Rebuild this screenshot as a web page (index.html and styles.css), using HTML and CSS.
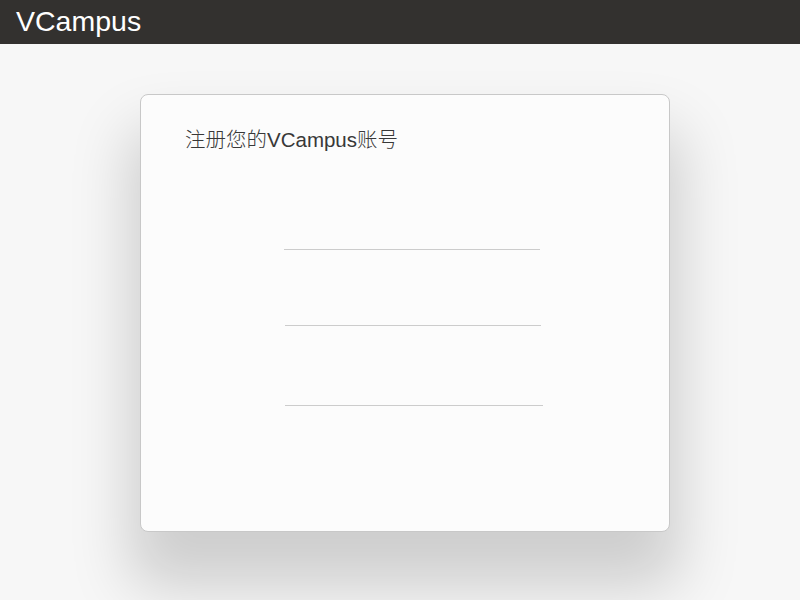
FILE: index.html
```html
<!DOCTYPE html>
<html lang="zh">
<head>
<meta charset="utf-8">
<title>VCampus</title>
<link rel="stylesheet" href="styles.css">
</head>
<body>
<header class="topbar"><span class="brand">VCampus</span></header>
<main class="stage">
  <section class="card">
    <h1 class="title">注册您的VCampus账号</h1>
    <div class="fields">
      <div class="field f1"></div>
      <div class="field f2"></div>
      <div class="field f3"></div>
    </div>
  </section>
</main>
</body>
</html>
```
FILE: styles.css
```css
html, body { margin: 0; padding: 0; }
body {
  width: 800px;
  height: 600px;
  overflow: hidden;
  background: #f7f7f7;
  font-family: "Liberation Sans", "Noto Sans CJK SC", sans-serif;
}
.topbar {
  height: 44px;
  background: #33312f;
  display: flex;
  align-items: center;
  padding-left: 16px;
}
.brand {
  color: #ffffff;
  font-size: 28.5px;
  line-height: 1;
  margin-top: -2px;
}
.stage {
  padding-top: 50px;
  padding-left: 140px;
}
.card {
  box-sizing: border-box;
  width: 530px;
  height: 438px;
  background: #fcfcfc;
  border: 1px solid #c8c8c8;
  border-radius: 8px;
  box-shadow: 0 45px 60px 10px rgba(0,0,0,0.17);
  padding: 33px 0 0 44px;
}
.title {
  margin: 0;
  font-weight: 300;
  font-size: 20.5px;
  line-height: 24px;
  color: #383838;
  font-family: "Liberation Sans", "Noto Sans CJK SC", sans-serif;
}
.fields {
  display: flex;
  flex-direction: column;
  padding-left: 99px;
  margin-top: 97px;
}
.field {
  height: 1px;
  background: #cccccc;
}
.f1 { width: 256px; }
.f2 { width: 256px; margin-left: 1px; margin-top: 75px; }
.f3 { width: 258px; margin-left: 1px; margin-top: 79px; }
```
